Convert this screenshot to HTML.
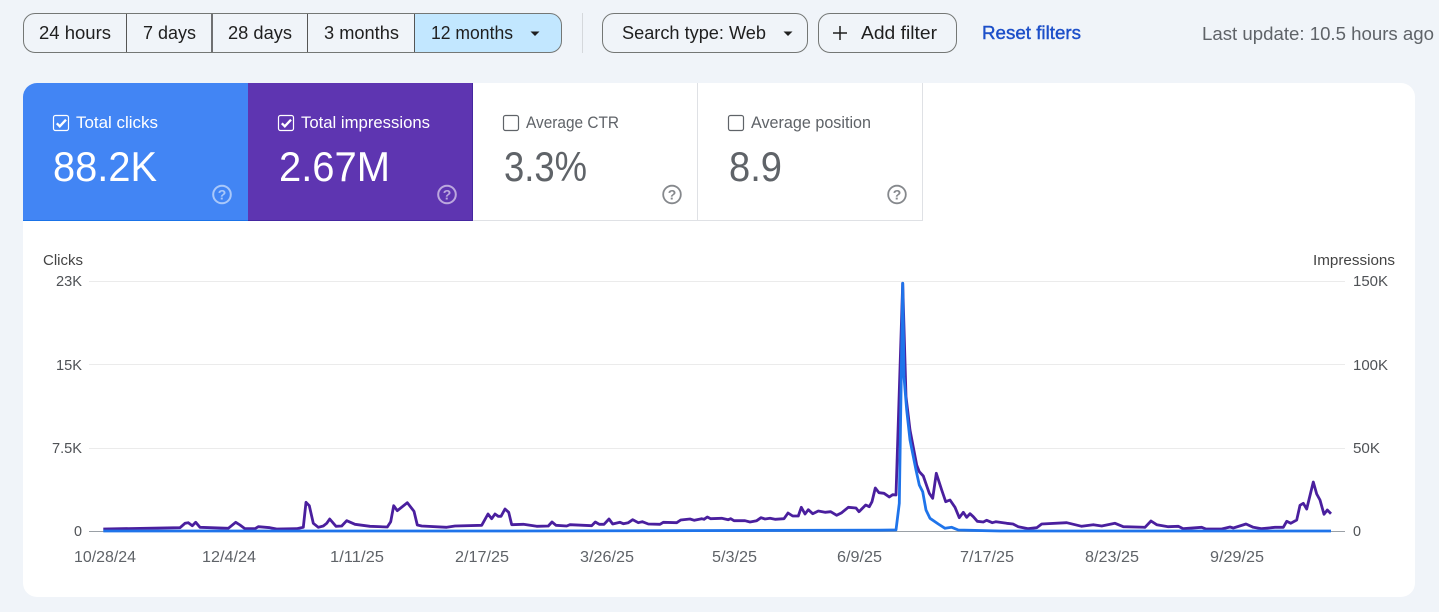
<!DOCTYPE html>
<html><head><meta charset="utf-8"><title>Search performance</title>
<style>
html,body{margin:0;padding:0;background:#f0f4f9;width:1439px;height:612px;overflow:hidden}
svg{display:block}
text{font-family:"Liberation Sans",sans-serif}
.b{font-size:18px;fill:#1f1f1f}
.t{font-size:16.5px}
.v{font-size:42px}
.a{font-size:15px;fill:#4f5256}
.d{font-size:16px;fill:#5f6368}
.q{font-size:14px;font-weight:bold;text-anchor:middle}
</style></head><body>
<svg width="1439" height="612" viewBox="0 0 1439 612" xmlns="http://www.w3.org/2000/svg">
<rect width="1439" height="612" fill="#f0f4f9"/>

<!-- segmented range -->
<path d="M414.5 13.5H550a11.5 11.5 0 0 1 11.500 11.500v16a11.500 11.500 0 0 1-11.500 11.500H414.500z" fill="#c2e7ff"/>
<rect x="23.500" y="13.500" width="538" height="39" rx="11.500" fill="none" stroke="#747775"/>
<path d="M126.500 14V52M212 14V52M307.500 14V52M414.500 14V52" stroke="#555" stroke-width="1"/>
<path d="M212 14V52" stroke="#444" stroke-width="1.500"/>
<text class="b" x="39" y="39" textLength="72" lengthAdjust="spacingAndGlyphs">24 hours</text>
<text class="b" x="143" y="39" textLength="53" lengthAdjust="spacingAndGlyphs">7 days</text>
<text class="b" x="228" y="39" textLength="64" lengthAdjust="spacingAndGlyphs">28 days</text>
<text class="b" x="324" y="39" textLength="75" lengthAdjust="spacingAndGlyphs">3 months</text>
<text class="b" x="431" y="39" textLength="82" lengthAdjust="spacingAndGlyphs">12 months</text>
<path d="M530.500 31.500h9l-4.500 4.500z" fill="#1f1f1f"/>
<path d="M582.500 13V53" stroke="#d5d8dc"/>

<rect x="602.500" y="13.500" width="205" height="39" rx="11.500" fill="#f0f4f9" stroke="#747775"/>
<text class="b" x="622" y="39" textLength="144" lengthAdjust="spacingAndGlyphs">Search type: Web</text>
<path d="M783.500 31.500h9l-4.500 4.500z" fill="#1f1f1f"/>
<rect x="818.500" y="13.500" width="138" height="39" rx="11.500" fill="#f0f4f9" stroke="#747775"/>
<path d="M840 26V40M833 33H847" stroke="#1f1f1f" stroke-width="1.500"/>
<text class="b" x="861" y="39" textLength="76" lengthAdjust="spacingAndGlyphs">Add filter</text>
<text x="982" y="39" font-size="18" fill="#1c4fc9" textLength="99" lengthAdjust="spacingAndGlyphs" style="stroke:#1c4fc9;stroke-width:.4">Reset filters</text>
<text x="1202" y="40" font-size="18" fill="#5f6368" textLength="232" lengthAdjust="spacingAndGlyphs">Last update: 10.5 hours ago</text>

<!-- card -->
<rect x="23" y="83" width="1392" height="514" rx="14" fill="#fff"/>

<!-- tiles -->
<path d="M248 83H37a14 14 0 0 0-14 14V221H248z" fill="#4285f4"/>
<path d="M23 220.500H248" stroke="#1a73e8" stroke-width="1"/>
<rect x="248" y="83" width="225" height="138" fill="#5e35b1"/>
<path d="M248 220.500H473M472.500 83V221" stroke="#4527a0" stroke-width="1"/>
<path d="M697.500 83V221M922.500 83V221M473 220.500H923" stroke="#dfe1e5" stroke-width="1"/>

<rect x="53.500" y="115.500" width="15" height="15" rx="2" fill="none" stroke="#fff" stroke-width="1.200"/>
<path d="M56.800 123.300l3 3 6.200-6.600" fill="none" stroke="#fff" stroke-width="2.300"/>
<text class="t" x="76" y="128" fill="#fff" textLength="82" lengthAdjust="spacingAndGlyphs">Total clicks</text>
<text class="v" x="53" y="181" fill="#fff" textLength="104" lengthAdjust="spacingAndGlyphs">88.2K</text>
<circle cx="222" cy="194.500" r="8.800" fill="none" stroke="#a9c8fa" stroke-width="2"/>
<text class="q" x="222" y="199.500" fill="#a9c8fa">?</text>

<rect x="278.500" y="115.500" width="15" height="15" rx="2" fill="none" stroke="#fff" stroke-width="1.200"/>
<path d="M281.800 123.300l3 3 6.200-6.600" fill="none" stroke="#fff" stroke-width="2.300"/>
<text class="t" x="301" y="128" fill="#fff" textLength="129" lengthAdjust="spacingAndGlyphs">Total impressions</text>
<text class="v" x="279" y="181" fill="#fff" textLength="111" lengthAdjust="spacingAndGlyphs">2.67M</text>
<circle cx="447" cy="194.500" r="8.800" fill="none" stroke="#bca8de" stroke-width="2"/>
<text class="q" x="447" y="199.500" fill="#bca8de">?</text>

<rect x="503.500" y="115.500" width="15" height="15" rx="2" fill="none" stroke="#5f6368" stroke-width="1.200"/>
<text class="t" x="526" y="128" fill="#5f6368" textLength="93" lengthAdjust="spacingAndGlyphs">Average CTR</text>
<text class="v" x="504" y="181" fill="#5f6368" textLength="83" lengthAdjust="spacingAndGlyphs">3.3%</text>
<circle cx="672" cy="194.500" r="8.800" fill="none" stroke="#85888c" stroke-width="1.800"/>
<text class="q" x="672" y="199.500" fill="#85888c">?</text>

<rect x="728.500" y="115.500" width="15" height="15" rx="2" fill="none" stroke="#5f6368" stroke-width="1.200"/>
<text class="t" x="751" y="128" fill="#5f6368" textLength="120" lengthAdjust="spacingAndGlyphs">Average position</text>
<text class="v" x="729" y="181" fill="#5f6368" textLength="53" lengthAdjust="spacingAndGlyphs">8.9</text>
<circle cx="897" cy="194.500" r="8.800" fill="none" stroke="#85888c" stroke-width="1.800"/>
<text class="q" x="897" y="199.500" fill="#85888c">?</text>

<!-- chart axes -->
<path d="M89 281.500H1345M89 364.500H1345M89 448.500H1345" stroke="#ebebeb"/>
<path d="M89 531.500H1345" stroke="#9aa0a6"/>
<text class="a" x="43" y="265" style="fill:#444" textLength="40" lengthAdjust="spacingAndGlyphs">Clicks</text>
<text class="a" x="1313" y="265" style="fill:#444" textLength="82" lengthAdjust="spacingAndGlyphs">Impressions</text>
<text class="a" x="56" y="286" textLength="26" lengthAdjust="spacingAndGlyphs">23K</text>
<text class="a" x="56" y="370" textLength="26" lengthAdjust="spacingAndGlyphs">15K</text>
<text class="a" x="52" y="453" textLength="30" lengthAdjust="spacingAndGlyphs">7.5K</text>
<text class="a" x="74" y="536" textLength="8" lengthAdjust="spacingAndGlyphs">0</text>
<text class="a" x="1353" y="286" textLength="35" lengthAdjust="spacingAndGlyphs">150K</text>
<text class="a" x="1353" y="370" textLength="35" lengthAdjust="spacingAndGlyphs">100K</text>
<text class="a" x="1353" y="453" textLength="27" lengthAdjust="spacingAndGlyphs">50K</text>
<text class="a" x="1353" y="536" textLength="8" lengthAdjust="spacingAndGlyphs">0</text>

<text class="d" x="74" y="562" textLength="62" lengthAdjust="spacingAndGlyphs">10/28/24</text>
<text class="d" x="202" y="562" textLength="54" lengthAdjust="spacingAndGlyphs">12/4/24</text>
<text class="d" x="330" y="562" textLength="54" lengthAdjust="spacingAndGlyphs">1/11/25</text>
<text class="d" x="455" y="562" textLength="54" lengthAdjust="spacingAndGlyphs">2/17/25</text>
<text class="d" x="580" y="562" textLength="54" lengthAdjust="spacingAndGlyphs">3/26/25</text>
<text class="d" x="712" y="562" textLength="45" lengthAdjust="spacingAndGlyphs">5/3/25</text>
<text class="d" x="837" y="562" textLength="45" lengthAdjust="spacingAndGlyphs">6/9/25</text>
<text class="d" x="960" y="562" textLength="54" lengthAdjust="spacingAndGlyphs">7/17/25</text>
<text class="d" x="1085" y="562" textLength="54" lengthAdjust="spacingAndGlyphs">8/23/25</text>
<text class="d" x="1210" y="562" textLength="54" lengthAdjust="spacingAndGlyphs">9/29/25</text>

<!-- impressions line -->
<polyline fill="none" stroke="#4a1f9e" stroke-width="2.800" stroke-linejoin="round" points="103.300,529 180,527.700 185,523.300 188.300,522.700 192.300,525.700 195.700,522.300 200,527.300 228.300,528.300 235.700,522.300 240,525 245,528.700 255,528.700 258.300,526.700 270,527.700 276.700,529 296.700,528.700 303.300,527.300 306,502.300 309.300,505.700 313.300,523.300 318.300,527.300 323.300,526 326.700,523.300 329.700,519 336,526.300 341.700,526 346.700,520.700 355,524.300 370,526.300 387.300,527 390.700,521.700 393.700,505.700 397.300,510.700 407.300,502.700 414,511.300 417.300,525 421.700,526 446.700,527.300 455,526 481.700,525.300 488,514 491.700,518.700 495,514 498.300,516.300 501,516.300 505,509 508.700,512.300 511.700,524.700 523.300,524.300 536.700,526.300 548.300,526 552,522 556,525.300 566.700,526 570,524.700 591.700,525.700 595.300,522 599.300,524.300 604,524.300 609,519 612.700,524 620,522.300 623.300,523.700 628.300,522.700 632.700,519.700 638.300,522.700 642.300,521.700 648.300,524 660,524.300 663.300,522.300 676.700,522.700 680.700,520 690,519 694.300,520.300 701.700,518.700 704,519.300 707.300,517 710.700,518.700 721.700,518.300 728.300,519.700 730.700,518.700 734,520.700 745,520.700 750,522 756.700,520.700 761,517.700 765,519 770,518.300 775,519.300 784,518.700 788,513 792.700,516 798.300,516 801.300,507.300 805,514 808.300,509.700 812.700,513.700 818.300,511 825,512.300 830.700,511.700 836.700,515.300 841.700,512.700 848.300,507.300 856,508 859,511.700 865.700,505 869.300,506.700 872,501.700 875.300,488 879,492.700 884,493.300 889.300,497 892.700,494.700 896,495 902.700,283.300 906,396.700 910,430 916.700,465 919.300,471.700 923.300,476 929.300,493.300 932.700,498.300 936.300,473.300 941.700,490 945.700,501.700 950,500 955,507.300 959.300,517.700 963.300,512.300 966.700,517.300 970,513.700 973.300,516.700 977.300,521.300 983.300,522 986.700,520.300 992.300,522.700 996,521.700 1006.700,523.300 1013,524 1018.300,526.700 1028.300,528.700 1036.700,527.700 1041.700,524 1066.700,522.700 1081.700,526.300 1093.300,524.700 1101.700,526 1115,523.300 1123.300,526.700 1145,527.300 1151,521 1156.700,524.700 1168.300,526.700 1178.300,526.300 1183.300,528.700 1201.700,527.300 1206,529 1221.700,529 1230,527 1233.300,528 1246,524 1253.300,527.300 1261.700,528.700 1275,527.300 1283.300,527.300 1286.700,521.300 1290.700,523.300 1296.700,520 1300,505.300 1303.300,503.300 1306.700,509 1313.300,482 1316.700,494 1320,500 1324,514.300 1327.300,510 1331,513.700"/>
<!-- clicks line -->
<polyline fill="none" stroke="#1f74ea" stroke-width="2.800" stroke-linejoin="round" points="103.300,531 500,531 880,530.200 896,530 899.300,503.300 902.700,283.300 904,376.700 906.700,410 910,440 916,470 919.300,485 922.700,491.700 926,510 930,518.300 938.300,524 945,528.300 951.700,527.300 958.300,530 970,530.300 1000,531 1331,531"/>
</svg>
</body></html>
